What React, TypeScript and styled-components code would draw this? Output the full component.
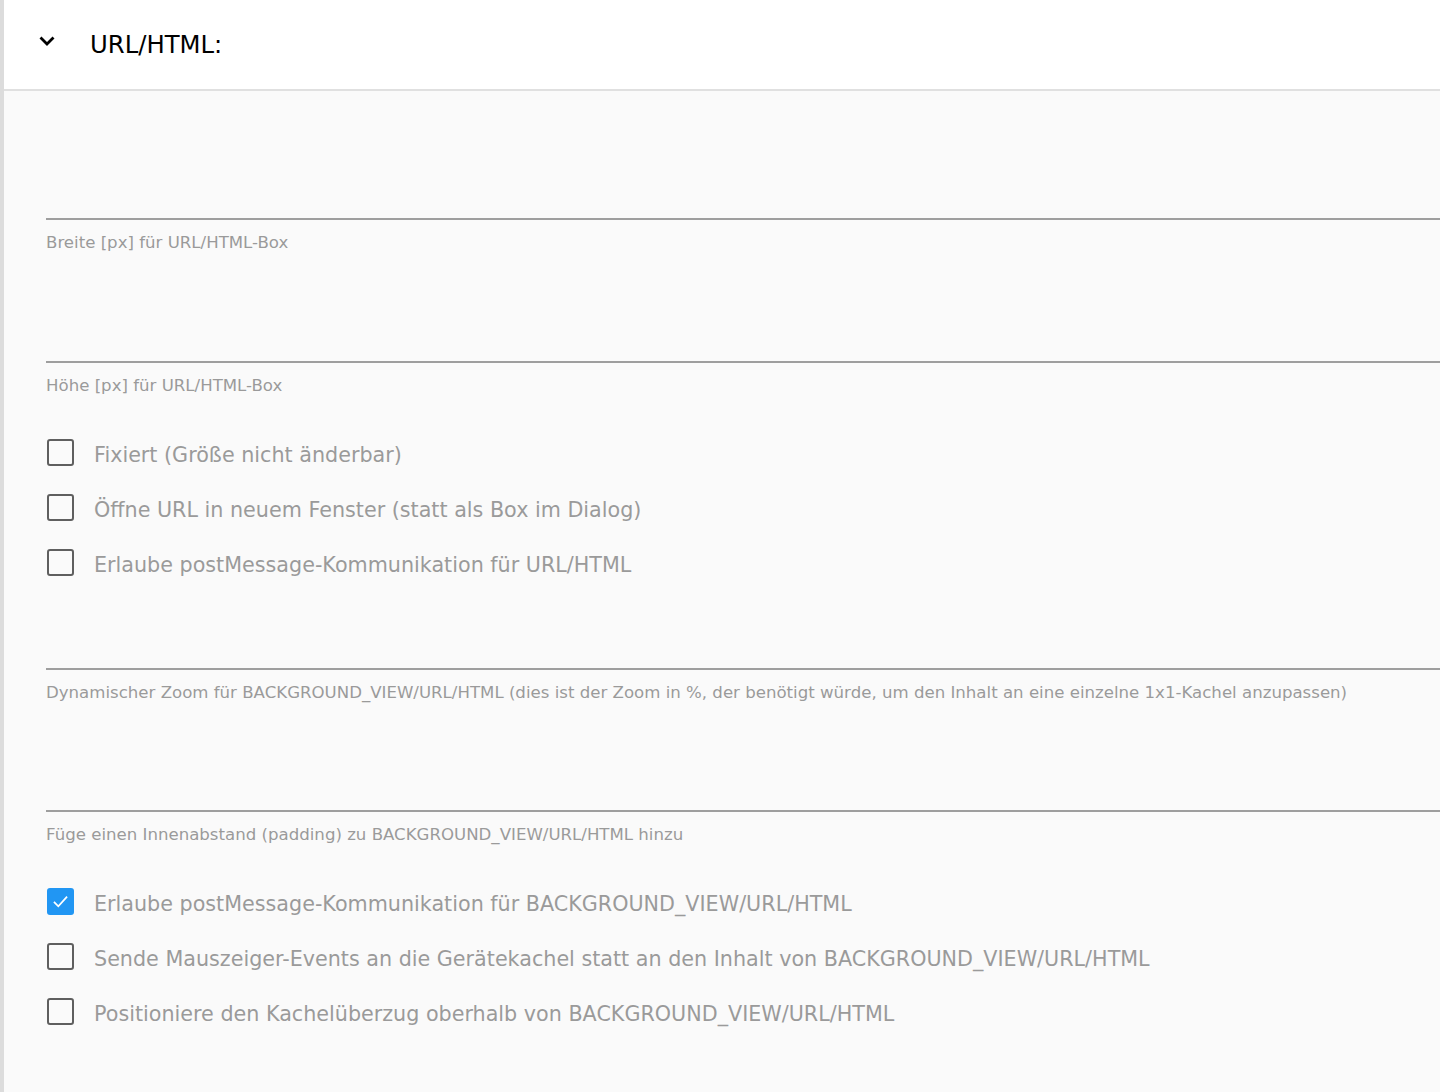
import React from "react";
import styled, { createGlobalStyle } from "styled-components";

const GlobalStyle = createGlobalStyle`
  html, body {
    margin: 0;
    padding: 0;
    background: #fafafa;
  }
  body {
    font-family: "DejaVu Sans", "Noto Sans", sans-serif;
  }
`;

interface FieldDef {
  kind: "field";
  label: string;
  top: number;
}

interface CheckDef {
  kind: "checks";
  top: number;
  items: { label: string; checked?: boolean }[];
}

const sections: (FieldDef | CheckDef)[] = [
  { kind: "field", label: "Breite [px] für URL/HTML-Box", top: 63 },
  { kind: "field", label: "Höhe [px] für URL/HTML-Box", top: 42 },
  {
    kind: "checks",
    top: 26.5,
    items: [
      { label: "Fixiert (Größe nicht änderbar)" },
      { label: "Öffne URL in neuem Fenster (statt als Box im Dialog)" },
      { label: "Erlaube postMessage-Kommunikation für URL/HTML" },
    ],
  },
  {
    kind: "field",
    label:
      "Dynamischer Zoom für BACKGROUND_VIEW/URL/HTML (dies ist der Zoom in %, der benötigt würde, um den Inhalt an eine einzelne 1x1-Kachel anzupassen)",
    top: 14.5,
  },
  { kind: "field", label: "Füge einen Innenabstand (padding) zu BACKGROUND_VIEW/URL/HTML hinzu", top: 41 },
  {
    kind: "checks",
    top: 26.5,
    items: [
      { label: "Erlaube postMessage-Kommunikation für BACKGROUND_VIEW/URL/HTML", checked: true },
      { label: "Sende Mauszeiger-Events an die Gerätekachel statt an den Inhalt von BACKGROUND_VIEW/URL/HTML" },
      { label: "Positioniere den Kachelüberzug oberhalb von BACKGROUND_VIEW/URL/HTML" },
    ],
  },
];

function ExpandIcon() {
  return (
    <svg width="24" height="24" viewBox="0 0 24 24">
      <path d="M5.5 8.5 L12 15 L18.5 8.5" fill="none" stroke="#000" strokeWidth="2.8" />
    </svg>
  );
}

function CheckBox({ checked }: { checked?: boolean }) {
  return (
    <Box $checked={checked}>
      {checked && (
        <svg width="21" height="21" viewBox="0 0 24 24">
          <path d="M4.5 12.5 L9.5 17.5 L19.5 6.5" fill="none" stroke="#fff" strokeWidth="2" />
        </svg>
      )}
    </Box>
  );
}

export default function App() {
  return (
    <>
      <GlobalStyle />
      <Panel>
        <Header>
          <IconSlot>
            <ExpandIcon />
          </IconSlot>
          <Title>URL/HTML:</Title>
        </Header>
        <Body>
          {sections.map((s, i) =>
            s.kind === "field" ? (
              <Field key={i} $top={s.top}>
                <InputArea />
                <Helper>{s.label}</Helper>
              </Field>
            ) : (
              <CheckGroup key={i} $top={s.top}>
                {s.items.map((it) => (
                  <CheckRow key={it.label}>
                    <CheckBox checked={it.checked} />
                    <CheckLabel>{it.label}</CheckLabel>
                  </CheckRow>
                ))}
              </CheckGroup>
            )
          )}
        </Body>
      </Panel>
    </>
  );
}

const Panel = styled.div`
  min-height: 1092px;
  border-left: 4px solid #dcdcdc;
  background: #fafafa;
  overflow: hidden;
`;

const Header = styled.div`
  height: 89px;
  background: #fff;
  border-bottom: 2px solid #e0e0e0;
  display: flex;
  align-items: center;
  padding-left: 31px;
`;

const IconSlot = styled.div`
  width: 24px;
  height: 24px;
  margin-top: -8px;
  display: flex;
`;

const Title = styled.div`
  margin-left: 31px;
  margin-top: 2px;
  font-size: 24.3px;
  color: #000;
  line-height: 1;
`;

const Body = styled.div`
  padding-left: 42px;
  padding-bottom: 40px;
  display: flex;
  flex-direction: column;
`;

const Field = styled.div<{ $top: number }>`
  margin-top: ${({ $top }) => $top}px;
  display: flex;
  flex-direction: column;
`;

const InputArea = styled.div`
  height: 64px;
  border-bottom: 2px solid #9e9e9e;
`;

const Helper = styled.div`
  margin-top: 10px;
  font-size: 16.6px;
  line-height: 25px;
  color: #9a9a9a;
  white-space: nowrap;
`;

const CheckGroup = styled.div<{ $top: number }>`
  margin-top: ${({ $top }) => $top}px;
  display: flex;
  flex-direction: column;
`;

const CheckRow = styled.div`
  height: 55px;
  display: flex;
  align-items: center;
  padding-left: 1px;
`;

const Box = styled.div<{ $checked?: boolean }>`
  width: 27px;
  height: 27px;
  box-sizing: border-box;
  border-radius: 3px;
  border: ${({ $checked }) => ($checked ? "none" : "2.5px solid #5f5f5f")};
  background: ${({ $checked }) => ($checked ? "#2196f3" : "transparent")};
  display: flex;
  align-items: center;
  justify-content: center;
  flex-shrink: 0;
`;

const CheckLabel = styled.span`
  margin-left: 20px;
  margin-top: 6px;
  font-size: 20.7px;
  color: #9a9a9a;
  white-space: nowrap;
`;
